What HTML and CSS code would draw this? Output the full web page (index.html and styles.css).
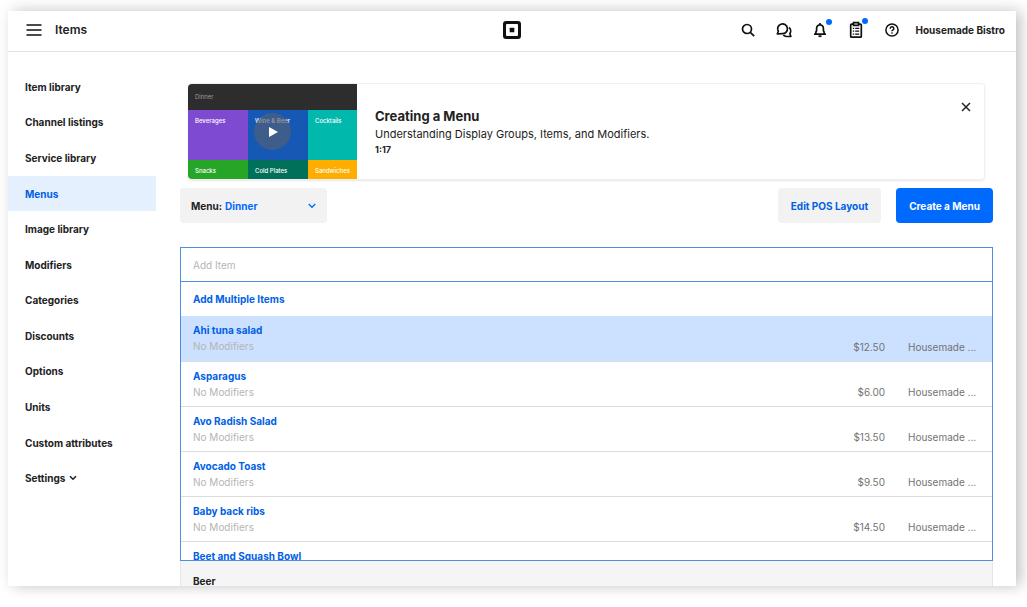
FILE: index.html
```html
<!DOCTYPE html>
<html lang="en">
<head>
    <meta charset="UTF-8">
    <meta name="viewport" content="width=device-width, initial-scale=1.0">
    <title>Items - Menus</title>
    <link rel="stylesheet" href="styles.css">
</head>
<body>
    <div class="window">
        <header class="topbar">
            <div class="topbar-left">
                <button class="icon-button" aria-label="Open navigation">
                    <svg width="16" height="12" viewBox="0 0 16 12" fill="none" stroke="currentColor" stroke-width="1.5"><path d="M.5 1h15M.5 6h15M.5 11h15"/></svg>
                </button>
                <span class="topbar-title">Items</span>
            </div>
            <a href="#" class="logo" aria-label="Home">
                <svg width="18" height="18" viewBox="0 0 18 18"><path fill="#111" fill-rule="evenodd" d="M3 0h12a3 3 0 0 1 3 3v12a3 3 0 0 1-3 3H3a3 3 0 0 1-3-3V3a3 3 0 0 1 3-3zm1 3a1 1 0 0 0-1 1v10a1 1 0 0 0 1 1h10a1 1 0 0 0 1-1V4a1 1 0 0 0-1-1z"/><rect x="6.700" y="6.700" width="4.600" height="4.600" rx=".6" fill="#111"/></svg>
            </a>
            <div class="topbar-right">
                <button class="icon-button" aria-label="Search">
                    <svg width="16" height="16" viewBox="0 0 16 16" fill="none" stroke="currentColor" stroke-width="1.700"><circle cx="7" cy="7" r="4.500"/><path d="M10.300 10.300l3.900 3.900"/></svg>
                </button>
                <button class="icon-button" aria-label="Messages">
                    <svg width="16" height="16" viewBox="0 0 16 16" fill="none" stroke="currentColor" stroke-width="1.700" stroke-linejoin="round"><path d="M1.300 12l1-2.700A4.900 4.900 0 1 1 6.300 11.700z"/><path d="M13 5.500a4.300 4.300 0 0 1 .9 5.900l.9 3.100H10.500a5 5 0 0 1-3.200-1.300"/></svg>
                </button>
                <button class="icon-button" aria-label="Notifications">
                    <svg width="16" height="16" viewBox="0 0 16 16" fill="none" stroke="currentColor" stroke-width="1.700" stroke-linejoin="round"><path d="M8 1v1.500M2 12.200h12M3.900 12V10l.7-1.200V6.200a3.400 3.400 0 0 1 6.800 0v2.600l.7 1.200v2"/><path d="M6.500 14.200h3" stroke-width="1.800"/></svg>
                    <span class="dot"></span>
                </button>
                <button class="icon-button" aria-label="Tasks">
                    <svg width="16" height="18" viewBox="0 0 16 18" fill="none" stroke="currentColor" stroke-width="1.700"><rect x="2.700" y="3.200" width="10.600" height="13" rx=".8"/><path d="M5.500 1.700h5v2.600h-5z" fill="#fff"/><path d="M4.800 7.300h1.400M7.200 7.300h4M4.800 10.200h1.400M7.200 10.200h4M4.800 13.100h1.400M7.200 13.100h4" stroke-width="1.300"/></svg>
                    <span class="dot"></span>
                </button>
                <button class="icon-button" aria-label="Help">
                    <svg width="16" height="16" viewBox="0 0 16 16" fill="none" stroke="currentColor" stroke-width="1.500"><circle cx="8" cy="8" r="6.100"/><path d="M6.200 6.700a1.800 1.800 0 1 1 2.600 1.500c-.6.300-.8.500-.8 1.100"/><circle cx="8" cy="11" r=".4" fill="currentColor" stroke-width=".8"/></svg>
                </button>
                <span class="account">Housemade Bistro</span>
            </div>
        </header>

        <div class="layout">
            <nav class="sidebar">
                <a href="#">Item library</a>
                <a href="#">Channel listings</a>
                <a href="#">Service library</a>
                <a href="#" class="active">Menus</a>
                <a href="#">Image library</a>
                <a href="#">Modifiers</a>
                <a href="#">Categories</a>
                <a href="#">Discounts</a>
                <a href="#">Options</a>
                <a href="#">Units</a>
                <a href="#">Custom attributes</a>
                <a href="#">Settings
                    <svg width="8" height="6" viewBox="0 0 8 6" fill="none" stroke="currentColor" stroke-width="1.600"><path d="M1 1.200l3 3 3-3"/></svg>
                </a>
            </nav>

            <main class="main">
                <section class="card">
                    <div class="thumb">
                        <span class="tile tile-dark">Dinner</span>
                        <span class="tile tile-purple">Beverages</span>
                        <span class="tile tile-blue">Wine &amp; Beer</span>
                        <span class="tile tile-teal">Cocktails</span>
                        <span class="tile tile-green">Snacks</span>
                        <span class="tile tile-forest">Cold Plates</span>
                        <span class="tile tile-orange">Sandwiches</span>
                        <button class="play" aria-label="Play video">
                            <svg width="10" height="12" viewBox="0 0 10 12"><path d="M1 1l9 5-9 5z" fill="#fff"/></svg>
                        </button>
                    </div>
                    <div class="card-text">
                        <h2>Creating a Menu</h2>
                        <p>Understanding Display Groups, Items, and Modifiers.</p>
                        <span class="duration">1:17</span>
                    </div>
                    <button class="close" aria-label="Close">
                        <svg width="10" height="10" viewBox="0 0 10 10" stroke="currentColor" stroke-width="1.500"><path d="M1 1l8 8M9 1L1 9"/></svg>
                    </button>
                </section>

                <div class="toolbar">
                    <div class="menu-select">
                        <label for="menu">Menu:</label>
                        <select id="menu">
                            <option>Dinner</option>
                        </select>
                        <svg width="8" height="6" viewBox="0 0 8 6" fill="none" stroke="#006aff" stroke-width="1.300"><path d="M.7 1l3.300 3.300L7.300 1"/></svg>
                    </div>
                    <button class="button secondary">Edit POS Layout</button>
                    <button class="button primary">Create a Menu</button>
                </div>

                <div class="picker">
                    <input type="text" class="add-item" placeholder="Add Item" aria-label="Add Item" autofocus>
                    <div class="results">
                        <button class="add-multiple">Add Multiple Items</button>
                        <table class="items">
                            <tr class="selected">
                                <td><a href="#">Ahi tuna salad</a><small>No Modifiers</small></td>
                                <td class="price">$12.50</td>
                                <td class="location">Housemade ...</td>
                            </tr>
                            <tr>
                                <td><a href="#">Asparagus</a><small>No Modifiers</small></td>
                                <td class="price">$6.00</td>
                                <td class="location">Housemade ...</td>
                            </tr>
                            <tr>
                                <td><a href="#">Avo Radish Salad</a><small>No Modifiers</small></td>
                                <td class="price">$13.50</td>
                                <td class="location">Housemade ...</td>
                            </tr>
                            <tr>
                                <td><a href="#">Avocado Toast</a><small>No Modifiers</small></td>
                                <td class="price">$9.50</td>
                                <td class="location">Housemade ...</td>
                            </tr>
                            <tr>
                                <td><a href="#">Baby back ribs</a><small>No Modifiers</small></td>
                                <td class="price">$14.50</td>
                                <td class="location">Housemade ...</td>
                            </tr>
                            <tr>
                                <td><a href="#">Beet and Squash Bowl</a></td>
                                <td class="price"></td>
                                <td class="location"></td>
                            </tr>
                        </table>
                    </div>
                </div>
                <div class="group-row">Beer</div>
            </main>
        </div>
    </div>
</body>
</html>
```

FILE: styles.css
```css
* {
    box-sizing: border-box;
}

body {
    margin: 0;
    padding: 11px 11px 21px 8px;
    height: 100vh;
    overflow: hidden;
    background-color: #fff;
    color: #222;
    font-family: Inter, "Liberation Sans", sans-serif;
    font-size: 10px;
    line-height: 16px;
}

a {
    color: inherit;
    text-decoration: none;
}

button,
select,
input {
    font: inherit;
    color: inherit;
    border: none;
    background: none;
    padding: 0;
    margin: 0;
}

button {
    cursor: pointer;
}

svg {
    display: block;
}

.window {
    height: 100%;
    display: flex;
    flex-direction: column;
    overflow: hidden;
    background-color: #fff;
    box-shadow: 5px 0 14px rgba(0, 0, 0, 0.24);
}

/* top bar */
.topbar {
    flex: none;
    display: grid;
    grid-template-columns: 1fr auto 1fr;
    align-items: center;
    height: 41px;
    padding: 0 11px 2px;
    border-bottom: 1px solid #e2e2e2;
    font-weight: 700;
}

.topbar-left {
    display: flex;
    align-items: center;
    gap: 13px;
    padding-left: 7px;
}

.topbar-title {
    font-size: 12px;
    font-weight: 600;
}

.topbar-right {
    display: flex;
    align-items: center;
    justify-content: flex-end;
    gap: 20px;
}

.icon-button {
    position: relative;
    color: #111;
}

.account {
    margin-left: -4px;
}

.dot {
    position: absolute;
    top: -3px;
    right: -4px;
    width: 6px;
    height: 6px;
    border-radius: 50%;
    background-color: #006aff;
}

.layout {
    flex: 1;
    display: flex;
    min-height: 0;
}

/* sidebar */
.sidebar {
    flex: none;
    width: 148px;
    display: grid;
    grid-auto-rows: 1fr;
    align-self: flex-start;
    min-height: 427px;
    margin-top: 17px;
    font-weight: 700;
}

.sidebar a {
    display: flex;
    align-items: center;
    gap: 4px;
    padding-left: 17px;
}

.sidebar .active {
    background-color: #e5f0ff;
    color: #005fe5;
}

.main {
    flex: 1;
    min-width: 0;
    padding: 31px 23px 0 24px;
}

/* video card */
.card {
    display: flex;
    align-items: center;
    margin: 0 8px;
    border: 1px solid #f0f0f0;
    border-left: none;
    border-radius: 4px;
    box-shadow: 0 1px 2px rgba(0, 0, 0, 0.1);
}

.thumb {
    position: relative;
    flex: none;
    width: 169px;
    display: grid;
    grid-template-columns: 60px 60px 49px;
    grid-template-rows: 26px 50px 19px;
    overflow: hidden;
    border-radius: 4px 0 0 4px;
    color: #fff;
    font-size: 6px;
    font-weight: 500;
    line-height: 8px;
}

.tile {
    padding: 7px 0 0 7px;
    white-space: nowrap;
}

.tile-dark {
    grid-column: 1 / 4;
    padding-top: 9px;
    background-color: #2d2d2d;
    color: #999;
    font-weight: 400;
}

.tile-purple { background-color: #7e4bd0; }
.tile-blue { background-color: #1659b5; }
.tile-teal { background-color: #00b8ab; }
.tile-green { background-color: #27a527; }
.tile-forest { background-color: #00705a; }
.tile-orange { background-color: #ffae00; }

.play {
    position: absolute;
    top: 29px;
    left: 66px;
    width: 37px;
    height: 37px;
    display: flex;
    align-items: center;
    justify-content: center;
    border-radius: 50%;
    background-color: rgba(85, 95, 115, 0.65);
}

.card-text {
    flex: 1;
    padding-left: 18px;
}

.card-text h2 {
    margin: 0;
    font-size: 13px;
    font-weight: 700;
    line-height: 20px;
}

.card-text p {
    margin: 0;
    font-size: 11px;
    line-height: 17px;
}

.duration {
    display: block;
    font-size: 9px;
    font-weight: 700;
    line-height: 14px;
}

.close {
    align-self: flex-start;
    margin: 18px 13px 0 0;
}

/* toolbar */
.toolbar {
    display: flex;
    gap: 15px;
    margin: 8px 0 24px;
    font-weight: 700;
}

.menu-select {
    display: flex;
    align-items: center;
    gap: 3px;
    width: 147px;
    margin-right: auto;
    padding: 0 11px;
    border-radius: 4px;
    background-color: #f2f2f2;
}

.menu-select select {
    flex: 1;
    appearance: none;
    color: #006aff;
}

.button {
    height: 35px;
    padding: 0 13px;
    border-radius: 4px;
    font-weight: 700;
}

.secondary {
    background-color: #f2f2f2;
    color: #005fe5;
}

.primary {
    background-color: #006aff;
    color: #fff;
}

/* item picker */
.picker {
    border: 1px solid #4a90e2;
}

.add-item {
    display: block;
    width: 100%;
    height: 34px;
    padding: 0 12px;
    border-bottom: 1px solid #4a90e2;
    outline: none;
}

.add-item::placeholder {
    color: #b5b5b5;
}

.results {
    max-height: 278px;
    overflow: hidden;
}

.add-multiple {
    display: block;
    width: 100%;
    height: 34px;
    padding: 0 12px;
    color: #005fe5;
    font-weight: 700;
    text-align: left;
}

.items {
    width: 100%;
    border-collapse: collapse;
    table-layout: fixed;
}

.items td {
    height: 45px;
    padding: 6px 0 6px 12px;
    border-bottom: 1px solid #dcdcdc;
    vertical-align: top;
}

.items a {
    display: block;
    color: #005fe5;
    font-weight: 700;
}

.items small {
    display: block;
    color: #b5b5b5;
    font-size: 10px;
}

.items .selected {
    background-color: #cce0ff;
}

.items .price,
.items .location {
    color: #737373;
    vertical-align: bottom;
}

.items .price {
    width: 80px;
    text-align: right;
}

.items .location {
    width: 107px;
    padding-left: 23px;
}

.group-row {
    height: 42px;
    padding: 12px;
    border: 1px solid #e6e6e6;
    border-top: none;
    background-color: #f5f5f5;
    font-weight: 700;
}
```
